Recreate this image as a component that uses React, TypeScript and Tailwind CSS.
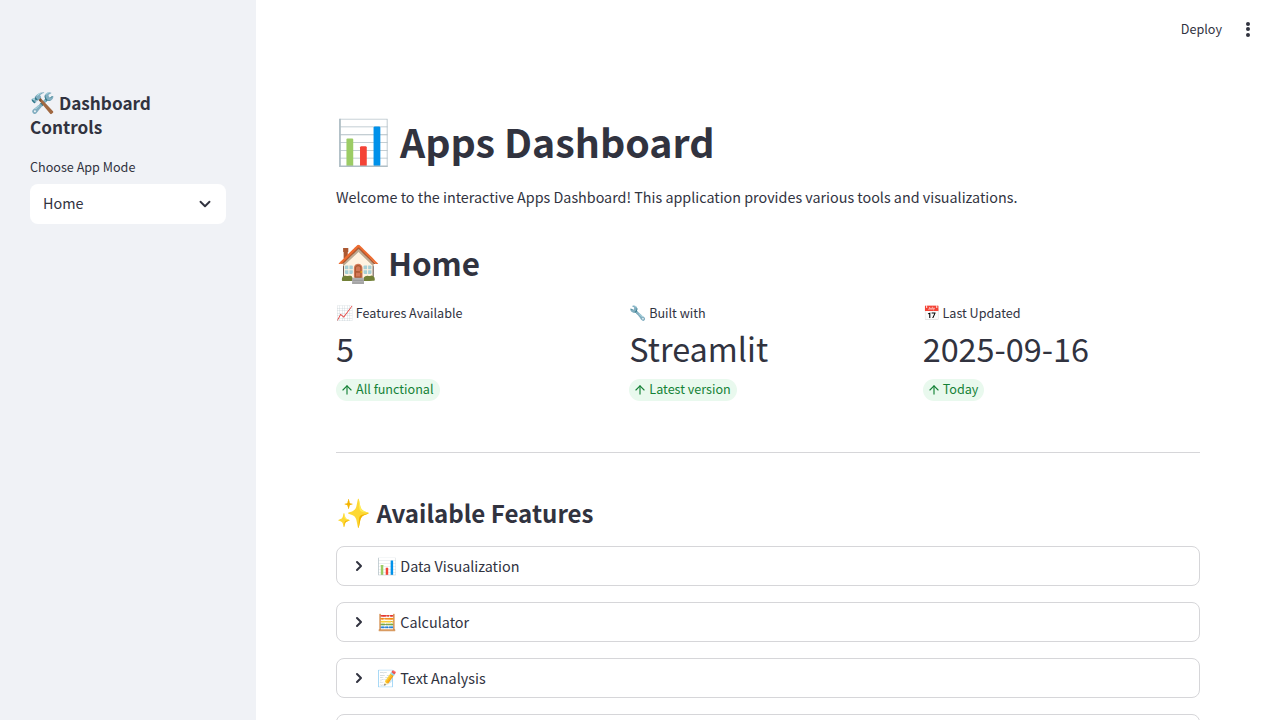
import { ChevronDown, ChevronRight, ArrowUp } from "lucide-react";

// Noto Sans CJK's latin runs about 1.11x larger than the reference face, so text sizes are scaled down and emoji keep the full size
const font = "font-['Noto_Sans_CJK_SC','Noto_Sans',sans-serif]";

const metrics = [
  { emoji: "📈", label: "Features Available", value: "5", delta: "All functional" },
  { emoji: "🔧", label: "Built with", value: "Streamlit", delta: "Latest version" },
  { emoji: "📅", label: "Last Updated", value: "2025-09-16", delta: "Today" },
];

const features = [
  { emoji: "📊", name: "Data Visualization" },
  { emoji: "🧮", name: "Calculator" },
  { emoji: "📝", name: "Text Analysis" },
];

function Sidebar() {
  return (
    <aside className="w-[256px] h-screen shrink-0 bg-[#f0f2f6] px-[30px] pt-[91px]">
      <h2 className="text-[17.2px] leading-[24px] font-semibold text-[#31333f]">
        <span className="text-[20px] leading-[0]">🛠️</span> Dashboard Controls
      </h2>
      <div className="mt-[18px] text-[12.6px] leading-[20px] text-[#31333f]">Choose App Mode</div>
      <div className="mt-[7px] h-[40px] bg-white rounded-lg flex items-center justify-between pl-[13px] pr-[12px] text-[14.4px] text-[#31333f]">
        <span className="pb-[2px]">Home</span>
        <ChevronDown className="w-[18px] h-[18px]" strokeWidth={2.5} />
      </div>
    </aside>
  );
}

export default function App() {
  return (
    <div className={`${font} flex h-screen overflow-hidden bg-white text-[#31333f]`}>
      <Sidebar />
      <main className="flex-1 relative px-[80px] pt-[111px]">
        <div className="absolute top-[19px] right-[30px] flex items-center gap-[24px] text-[12.6px] leading-[20px]">
          <span>Deploy</span>
          <span className="flex flex-col gap-[1.5px]">
            <i className="w-[4px] h-[4px] rounded-full bg-[#31333f]" />
            <i className="w-[4px] h-[4px] rounded-full bg-[#31333f]" />
            <i className="w-[4px] h-[4px] rounded-full bg-[#31333f]" />
          </span>
        </div>
        <h1 className="text-[39.35px] leading-[60px] font-bold">
          <span className="text-[44px] leading-[0]">📊</span> Apps Dashboard
        </h1>
        <p className="mt-[12px] text-[14.34px] leading-[28px]">Welcome to the interactive Apps Dashboard! This application provides various tools and visualizations.</p>
        <h2 className="mt-[28px] text-[31.4px] leading-[48px] font-semibold">
          <span className="text-[36px] leading-[0]">🏠</span> Home
        </h2>
        <div className="mt-[16px] grid grid-cols-3 gap-[16px]">
          {metrics.map((m) => (
            <div key={m.label}>
              <div className="text-[12.6px] leading-[20px]">
                <span className="text-[14px] leading-[0]">{m.emoji}</span> {m.label}
              </div>
              <div className="text-[32.4px] leading-[50px]">{m.value}</div>
              <span className="mt-[6px] inline-flex items-center gap-[2px] h-[22px] rounded-full bg-[#e9f9ee] text-[#158237] text-[12.6px] pl-[4px] pr-[6px] pb-[1px]">
                <ArrowUp className="w-[14px] h-[14px]" />
                {m.delta}
              </span>
            </div>
          ))}
        </div>
        <hr className="mt-[50.4px] border-[#d6d6d9]" />
        <h3 className="mt-[40px] text-[24.1px] leading-[40px] font-semibold">
          <span className="text-[28px] leading-[0]">✨</span> Available Features
        </h3>
        <div className="mt-[13px] flex flex-col gap-[16px]">
          {features.map((f) => (
            <div key={f.name} className="h-[40px] shrink-0 rounded-lg border border-[#d6d6d9] flex items-center pl-[14px] gap-[10px] text-[14.4px]">
              <ChevronRight className="w-[16px] h-[16px]" strokeWidth={3} />
              <span>
                <span className="text-[16px] leading-[0]">{f.emoji}</span> {f.name}
              </span>
            </div>
          ))}
          <div className="h-[40px] shrink-0 rounded-lg border border-[#d6d6d9]" />
        </div>
      </main>
    </div>
  );
}
